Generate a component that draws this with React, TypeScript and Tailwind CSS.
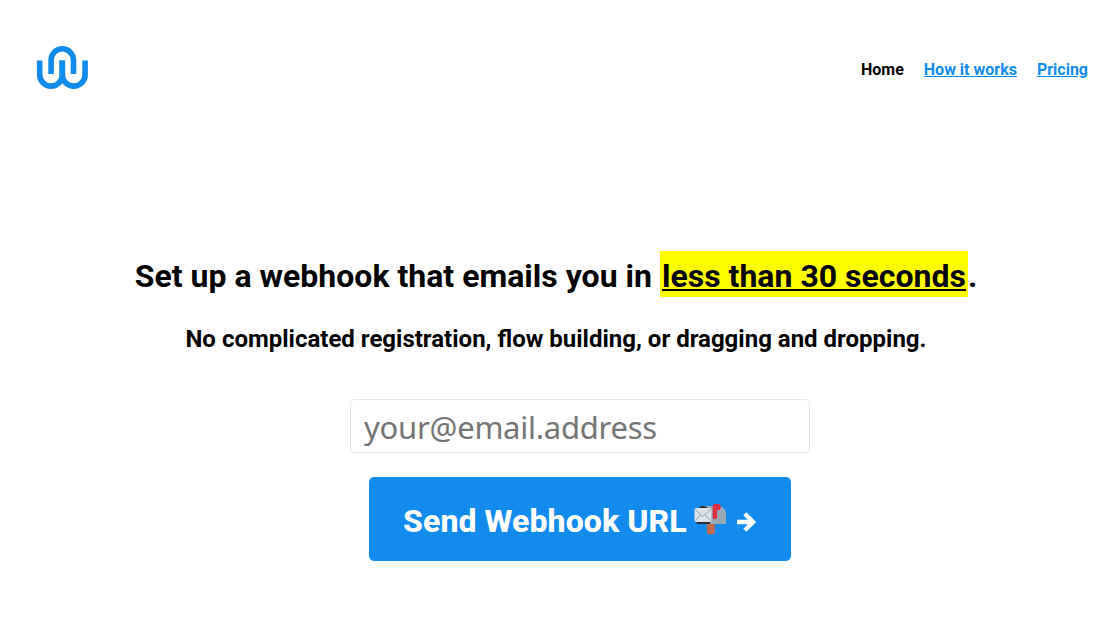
const LOGO_COLOR = '#118bee';

function Logo() {
  return (
    <svg width="52" height="44" viewBox="0 0 52 44" fill="none" stroke={LOGO_COLOR} strokeWidth="5.6">
      <path d="M3.7 15.5V29.7a11.3 11.4 0 0 0 22.6 0V15.5" />
      <path d="M15.1 29V15.2a11.2 11.4 0 0 1 22.4 0V29" />
      <path d="M26.3 15.5V29.7a11.4 11.4 0 0 0 22.8 0V15.5" />
    </svg>
  );
}

function Mailbox() {
  return (
    <svg width="32" height="32" viewBox="0 0 36 36">
      <path fill="#99aab5" d="M9 3.5h18c5 0 9 4 9 9v11H9z" />
      <path fill="#292f33" d="M6 5C7 2.8 12 2.8 14 4.5l4 3v15c0 .6-.4 1-1 1H3v-2z" />
      <path fill="#c1694f" d="M14.5 23.500h9v10c0 1-2 2-4.5 2s-4.5-1-4.5-2z" />
      <path fill="#dde3e8" d="M3 5.5h14c1.500 0 2.500 1 2.500 2.500v11c0 1.500-1 2.500-2.500 2.500H3C1.500 21.500.5 20.500.5 19V8C.5 6.500 1.500 5.500 3 5.500z" />
      <path fill="none" stroke="#a5b2bc" strokeWidth="1.2" d="M1.5 7.500l8.500 7.500 8.500-7.500M1.500 20l6-7M18.500 20l-6-7" />
      <path fill="#dd2e44" d="M24 1h4c1 0 2 1 2 2v3c0 1-1 2-2 2h-2v8c0 1-1 2-2.500 2S21 17 21 16V4c0-2 1-3 3-3z" />
    </svg>
  );
}

function Arrow() {
  return (
    <svg width="20" height="20" viewBox="0 0 20 20" fill="none" stroke="currentColor" strokeWidth="4.3">
      <path d="M0 10H16M7.8 1.800l8.400 8.200-8.400 8.200" />
    </svg>
  );
}

function Nav() {
  return (
    <nav className="mt-0.5 flex gap-5 text-base font-bold leading-6">
      <a className="text-black">Home</a>
      <a href="#how" className="text-[#118bee] underline">How it works</a>
      <a href="#pricing" className="text-[#118bee] underline">Pricing</a>
    </nav>
  );
}

export default function App() {
  return (
    <div className="min-h-[641px] bg-white font-['Roboto',sans-serif] text-black">
      <header className="flex h-[138px] items-center justify-between pl-[36px] pr-6">
        <div className="mb-1">
          <Logo />
        </div>
        <Nav />
      </header>
      <main className="flex flex-col items-center pt-[114px] text-center">
        <h1 className="text-[32px] font-bold leading-[48px] tracking-[0.01px]">
          Set up a webhook that emails you in <mark className="bg-[#ffff00] px-0.5 pb-0.5 pt-1.5 underline decoration-2 underline-offset-2">less than 30 seconds</mark>.
        </h1>
        <h2 className="mt-[21px] text-2xl font-bold leading-9">
          No complicated registration, flow building, or dragging and dropping.
        </h2>
        <form className="ml-12 mt-[42px] flex flex-col items-center">
          <input
            type="email"
            placeholder="your@email.address"
            className="h-[54px] w-[460px] rounded-[5px] border border-[#e6e6e6] px-[13px] pt-0.5 font-['Noto_Sans',sans-serif] text-[31px] tracking-[-0.25px] placeholder:text-[#757575]"
          />
          <button type="button" className="mt-6 flex h-[84px] w-[422px] items-center rounded-[5px] bg-[#118bee] pl-[34px] text-[32px] font-extrabold text-white">
            <span className="mr-[7px] mt-1 tracking-[0.08px]">Send Webhook URL</span>
            <Mailbox />
            <span className="ml-[11px] mt-1.5"><Arrow /></span>
          </button>
        </form>
      </main>
    </div>
  );
}
